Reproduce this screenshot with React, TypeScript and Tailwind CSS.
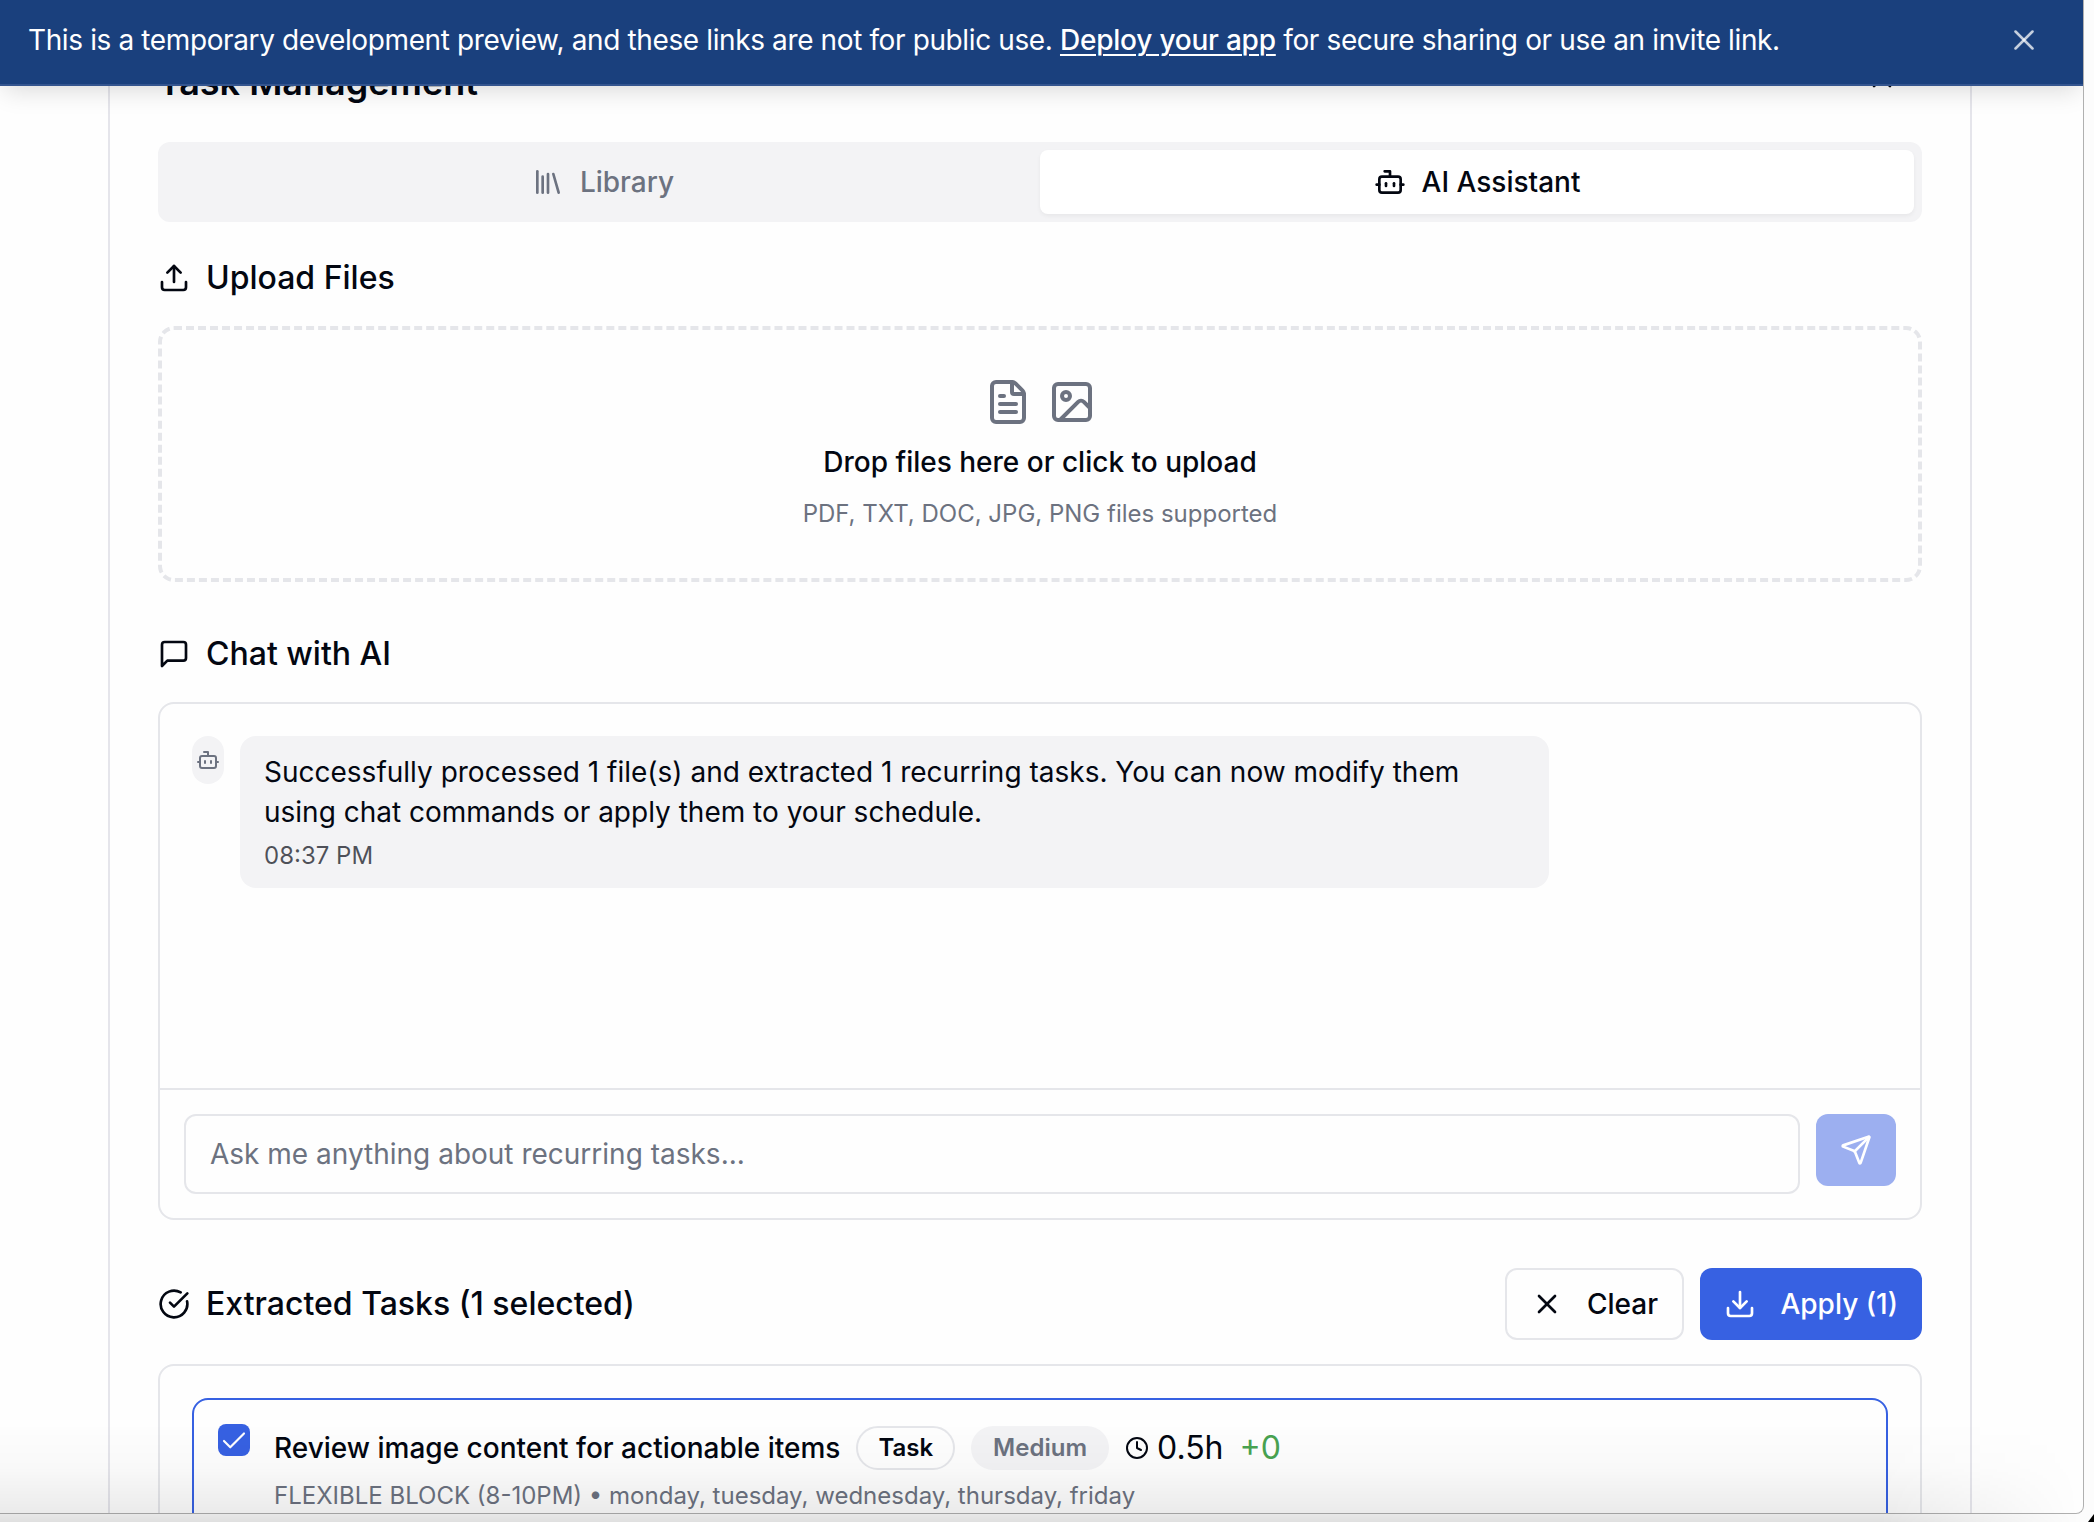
import type { ComponentType, ReactNode } from "react";
import { Library, Bot, Upload, FileText, Image, Send, CircleCheckBig, X, Download, Clock, Check, ChevronUp } from "lucide-react";

function ChatSquare({ className }: { className?: string }) {
  return (
    <svg className={className} viewBox="0 0 24 24" fill="none" stroke="currentColor" strokeWidth={2} strokeLinecap="round" strokeLinejoin="round">
      <path d="M21 15a2 2 0 0 1-2 2H7l-4 4V5a2 2 0 0 1 2-2h14a2 2 0 0 1 2 2z" />
    </svg>
  );
}

function Heading({ icon: Icon, children }: { icon: ComponentType<{ className?: string }>; children: ReactNode }) {
  return (
    <h3 className="flex h-12 items-center gap-4 text-[32px] leading-[48px] font-medium">
      <Icon className="size-8 shrink-0" />
      <span className="whitespace-nowrap">{children}</span>
    </h3>
  );
}

export default function App() {
  return (
    <div className="relative h-[1522px] w-[2094px] overflow-hidden bg-[#fcfcfc] font-['Inter',sans-serif] text-[#030711]">
      <div className="relative h-[1514px] w-[2084px] overflow-hidden rounded-br-lg border-r border-b border-[#b0b0b0] bg-[#fefefe]">
        <header className="relative z-10 flex h-[86px] items-center justify-between border-b-2 border-[#34558f] bg-[#1a407d] pr-[42px] pb-1 pl-7 text-[28px] text-white shadow-[0_8px_24px_-4px_rgba(0,0,0,0.15)]">
          <p className="tracking-[-0.38px] whitespace-nowrap">
            This is a temporary development preview, and these links are not for public use.{" "}
            <a className="font-medium tracking-[-0.22px] underline decoration-2 underline-offset-4">Deploy your app</a> for secure sharing or use an invite link.
          </p>
          <X className="size-[34px] text-white/75" strokeWidth={1.8} />
        </header>

        <main className="-mt-[86px] ml-[108px] h-[1600px] w-[1864px] border-x-2 border-[#e5e5eb] px-12 pt-[54px]">
          <div className="flex h-14 items-center justify-between">
            <h2 className="text-[36px] leading-[56px] font-semibold">Task Management</h2>
            <ChevronUp className="mr-6 size-8" />
          </div>

          <div className="mt-8 flex h-20 rounded-xl bg-[#f3f3f5] p-2 text-[28px] font-medium">
            <button className="flex flex-1 items-center justify-center gap-4 text-[#6c7280]">
              <Library className="size-8" />
              Library
            </button>
            <button className="flex flex-1 items-center justify-center gap-4 rounded-lg bg-white shadow-[0_2px_4px_rgba(0,0,0,0.05)]">
              <Bot className="size-8" />
              AI Assistant
            </button>
          </div>

          <section className="mt-8 space-y-6">
            <Heading icon={Upload}>Upload Files</Heading>
            <div className="flex h-64 flex-col items-center rounded-2xl border-4 border-dashed border-[#e5e6ea] pt-12">
              <div className="flex gap-4 text-[#6c7280]">
                <FileText className="size-12" />
                <Image className="size-12" />
              </div>
              <p className="mt-4 text-[28px] leading-10 font-medium">Drop files here or click to upload</p>
              <p className="mt-4 text-2xl leading-8 text-[#6c7280]">PDF, TXT, DOC, JPG, PNG files supported</p>
            </div>
          </section>

          <section className="mt-12 space-y-6">
            <Heading icon={ChatSquare}>Chat with AI</Heading>
            <div className="flex h-[518px] flex-col rounded-2xl border-2 border-[#e5e6ea]">
              <div className="flex flex-1 items-start gap-4 p-8">
                <span className="flex h-12 w-8 items-center justify-center rounded-full bg-[#f3f3f5] text-[#6c7280]">
                  <Bot className="size-6" />
                </span>
                <div className="w-[1309px] rounded-2xl bg-[#f3f3f5] px-6 py-4">
                  <p className="text-[28px] leading-10">
                    Successfully processed 1 file(s) and extracted 1 recurring tasks. You can now modify them
                    <br />
                    using chat commands or apply them to your schedule.
                  </p>
                  <p className="mt-2 text-2xl leading-8 text-[#030711]/70">08:37 PM</p>
                </div>
              </div>
              <div className="flex gap-4 border-t-2 border-[#e5e6ea] p-6">
                <div className="flex h-20 flex-1 items-center rounded-xl border-2 border-[#e5e6ea] px-6 text-[28px] text-[#6c7280]">
                  Ask me anything about recurring tasks...
                </div>
                <button className="flex h-[72px] w-20 items-center justify-center rounded-xl bg-[#9caff0] text-white">
                  <Send className="size-8" />
                </button>
              </div>
            </div>
          </section>

          <section className="mt-12">
            <div className="flex items-center justify-between">
              <Heading icon={CircleCheckBig}>Extracted Tasks (1 selected)</Heading>
              <div className="flex gap-4 text-[28px] font-medium">
                <button className="flex h-[72px] w-[179px] items-center justify-between rounded-xl border-2 border-[#e5e6ea] px-6">
                  <X className="size-8" />
                  Clear
                </button>
                <button className="flex h-[72px] w-[222px] items-center justify-between rounded-xl bg-[#3761e2] px-6 text-white">
                  <Download className="size-8" />
                  Apply (1)
                </button>
              </div>
            </div>
            <div className="mt-6 rounded-2xl border-2 border-[#e5e6ea] p-8">
              <div className="flex h-60 items-start gap-6 rounded-2xl border-2 border-[#3761e2] p-6">
                <span className="flex size-8 items-center justify-center rounded-lg bg-[#3761e2] pt-0.5 text-white">
                  <Check className="size-[30px]" strokeWidth={1.7} />
                </span>
                <div>
                  <div className="flex h-12 items-center gap-4">
                    <span className="text-[28px] font-medium whitespace-nowrap">Review image content for actionable items</span>
                    <span className="flex h-11 items-center rounded-full border-2 border-[#e5e6ea] px-5 text-2xl font-semibold">Task</span>
                    <span className="flex h-11 items-center rounded-full bg-[#f3f3f5] px-[22px] text-2xl font-semibold text-[#6c7280]">Medium</span>
                    <span className="flex items-center gap-2 text-[32px]">
                      <Clock className="size-6" />
                      0.5h
                    </span>
                    <span className="text-[32px] text-[#49a351]">+0</span>
                  </div>
                  <p className="mt-2 text-2xl leading-8 text-[#6c7280]">
                    FLEXIBLE BLOCK (8-10PM) • monday, tuesday, wednesday, thursday, friday
                  </p>
                </div>
              </div>
            </div>
          </section>
        </main>
      </div>
      {/* Shade falling over the lower edge of the window */}
      <div className="pointer-events-none absolute inset-x-0 bottom-0 z-20 h-[100px] bg-[linear-gradient(to_bottom,rgba(0,0,0,0),rgba(0,0,0,0.02)_45%,rgba(0,0,0,0.075)_90%,rgba(0,0,0,0.11))] [mask-image:linear-gradient(to_right,black_1880px,rgba(0,0,0,0.45)_1990px,transparent_2080px)]" />
      <div className="absolute right-0 bottom-0 z-20 h-[8px] w-[6px] bg-black [clip-path:polygon(100%_0,100%_100%,0_100%)]" />
    </div>
  );
}
